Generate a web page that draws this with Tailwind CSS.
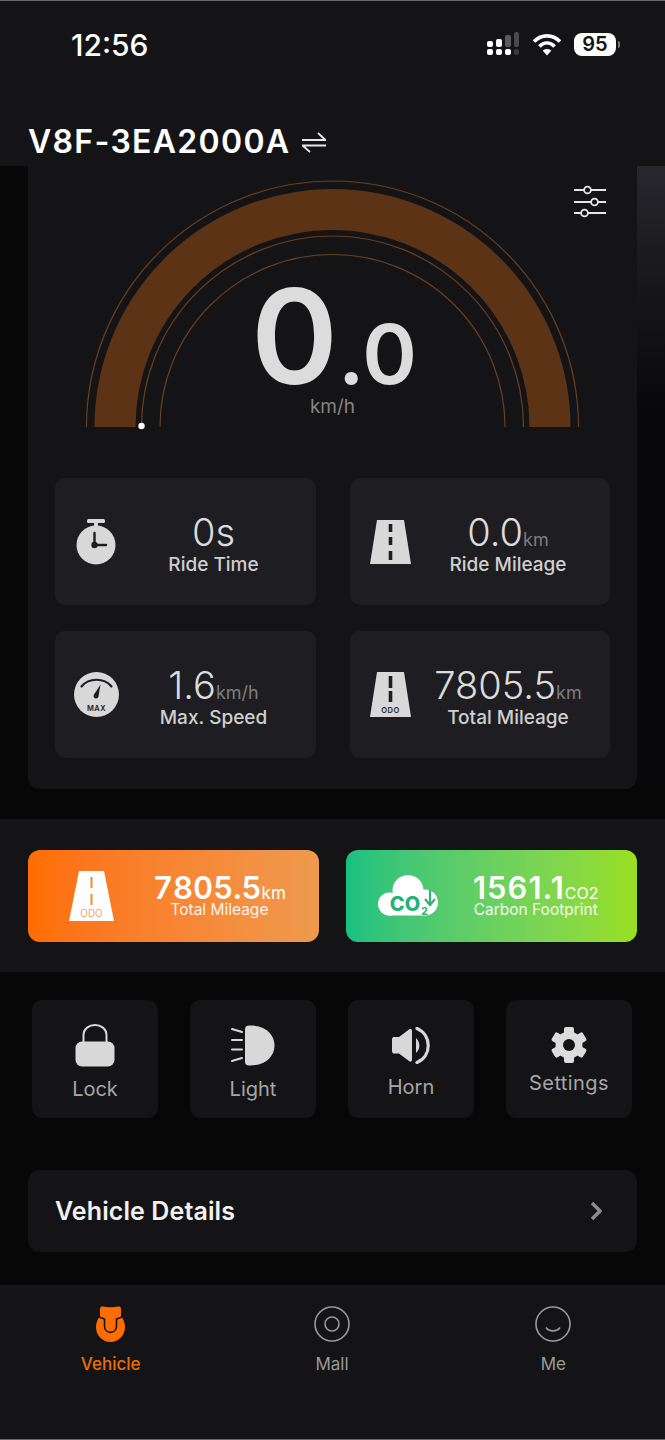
<!DOCTYPE html>
<html lang="en">
<head>
  <meta charset="UTF-8" />
  <title>Vehicle</title>
  <script src="https://cdn.jsdelivr.net/npm/@tailwindcss/browser@4"></script>
</head>

<body class="bg-[#070708]">
<div class="w-[665px] h-[1440px] flex flex-col overflow-hidden font-[Inter,sans-serif] bg-[#070708] text-white border-y border-y-[#6a6a6a]">

  <!-- Header -->
  <header class="h-[165px] shrink-0 bg-[#141416] flex flex-col">
    <div class="h-[121px] flex items-start justify-between pt-[26px] pl-[71px] pr-[45px]">
      <span class="text-[30px] leading-[36px] font-medium">12:56</span>
      <div class="flex items-center gap-[12px] pt-[5px]">
        <svg width="34" height="24" viewBox="0 0 34 24">
          <g fill="#fff">
            <rect x="1" y="9" width="6" height="6" rx="2"/><rect x="10" y="7" width="6" height="8" rx="2"/>
            <rect x="1" y="17" width="6" height="6" rx="2"/><rect x="10" y="17" width="6" height="6" rx="2"/><rect x="19" y="17" width="6" height="6" rx="2"/>
          </g>
          <rect x="19" y="3" width="6" height="12" rx="2" fill="#5a5a5a"/>
          <rect x="28" y="0" width="5" height="15" rx="2" fill="#4a4a4a"/>
          <rect x="28" y="17" width="5" height="6" rx="2" fill="#3a3a3a"/>
        </svg>
        <svg width="30" height="23" viewBox="0 0 30 23" fill="none" stroke="#fff" stroke-width="3.6">
          <path d="M2 8.6 C9.5 1 20.5 1 28 8.6"/>
          <path d="M7.4 13.4 C12 8.8 18 8.8 22.6 13.4"/>
          <path d="M15 22.5 L10.6 17.6 C13 15.4 17 15.4 19.4 17.6 Z" fill="#fff" stroke="none"/>
        </svg>
        <div class="flex items-center gap-[2px]">
          <div class="w-[42px] h-[23px] rounded-[8px] bg-white text-[#141416] text-[20px] leading-[23px] font-semibold text-center">95</div>
          <div class="w-[2px] h-[7px] rounded-r-full bg-[#777]"></div>
        </div>
      </div>
    </div>
    <div class="flex items-center pl-[28px] gap-[12px]">
      <span class="text-[32px] leading-[40px] font-semibold tracking-[1.3px]">V8F-3EA2000A</span>
      <svg width="24" height="21" viewBox="0 0 24 21" fill="none" stroke="#e8e8e8" stroke-width="1.8">
        <path d="M0 8 H23.5 L16 1"/>
        <path d="M24 13.5 H0.5 L8 20"/>
      </svg>
    </div>
  </header>

  <!-- Gauge and ride stats -->
  <div class="relative shrink-0 h-[623px]">
    <div class="absolute inset-y-0 right-0 w-[28px] bg-gradient-to-b from-[#27272d] to-[#08080a] to-[40%]"></div>
    <section class="relative mx-[28px] h-full bg-[#141416] rounded-b-[12px]">
      <svg class="block" width="609" height="270" viewBox="0 0 609 270" fill="none">
        <path d="M58.5 261 A246 246 0 0 1 550.5 261" stroke="#6a3f1e" stroke-width="1.2"/>
        <path d="M87 261 A217.5 217.5 0 0 1 522 261" stroke="#5c3415" stroke-width="41"/>
        <path d="M113.5 261 A191 191 0 0 1 495.5 261" stroke="#6a3f1e" stroke-width="1.2"/>
        <path d="M132 261 A172.5 172.5 0 0 1 477 261" stroke="#6a3f1e" stroke-width="1.2"/>
        <circle cx="113.5" cy="260" r="3.2" fill="#fff"/>
      </svg>
      <svg class="absolute top-[19px] left-[545px]" width="34" height="34" viewBox="0 0 34 34" fill="none" stroke="#e6e6e6" stroke-width="1.8">
        <path d="M1 5 H11 M18 5 H33 M1 17 H18 M25 17 H33 M1 28 H8 M15 28 H33"/>
        <circle cx="14.5" cy="5" r="3.4"/><circle cx="21.5" cy="17" r="3.4"/><circle cx="11.5" cy="28" r="3.4"/>
      </svg>
      <div class="absolute top-[120px] inset-x-0 flex flex-col items-center">
        <div class="flex items-baseline text-[#dcdcdc] font-semibold pl-[3px] h-[100px]">
          <span class="text-[132px] leading-[100px]">0</span><span class="text-[83px] leading-[100px]">.0</span>
        </div>
        <span class="text-[19px] leading-[24px] text-[#858585] mt-[9px]">km/h</span>
      </div>

      <div class="grid grid-cols-[261px_260px] grid-rows-[127px_127px] gap-x-[34px] gap-y-[26px] mt-[42px] ml-[27px]">
        <div class="bg-[#1e1e22] rounded-[10px] flex items-center">
          <div class="w-[82px] flex justify-center">
            <svg width="40" height="46" viewBox="0 0 40 46">
              <rect x="11" y="0" width="18" height="4" rx="1.5" fill="#d8d8d8"/>
              <rect x="18" y="3" width="4" height="5" fill="#d8d8d8"/>
              <circle cx="20" cy="26" r="19.5" fill="#d8d8d8"/>
              <path d="M18.5 14 V26 H30" fill="none" stroke="#1e1e22" stroke-width="2.4" stroke-linecap="round"/>
              <circle cx="18.5" cy="26" r="3.2" fill="#1e1e22"/>
            </svg>
          </div>
          <div class="flex-1 pr-[26px] pt-[3px] text-center">
            <div class="text-[38px] leading-[44px] font-light text-[#dcdcdc]">0s</div>
            <div class="text-[19px] leading-[22px] font-medium text-[#cfcfcf]">Ride Time</div>
          </div>
        </div>

        <div class="bg-[#1e1e22] rounded-[10px] flex items-center">
          <div class="w-[81px] flex justify-center">
            <svg width="41" height="44" viewBox="0 0 41 44">
              <path d="M7 0 H34 L41 44 H0 Z" fill="#d8d8d8"/>
              <path d="M20.5 4 V12 M20.5 17 V25 M20.5 31 V40" stroke="#1e1e22" stroke-width="3.6"/>
            </svg>
          </div>
          <div class="flex-1 pr-[25px] pt-[3px] text-center">
            <div class="text-[38px] leading-[44px] font-light text-[#dcdcdc]">0.0<span class="text-[18px] leading-none text-[#7d7d7d] font-normal">km</span></div>
            <div class="text-[19px] leading-[22px] font-medium text-[#cfcfcf]">Ride Mileage</div>
          </div>
        </div>

        <div class="bg-[#1e1e22] rounded-[10px] flex items-center">
          <div class="w-[82px] flex justify-center">
            <svg width="45" height="45" viewBox="0 0 45 45">
              <circle cx="22.5" cy="22.5" r="22.5" fill="#d8d8d8"/>
              <path d="M7.5 14.5 C15 5.5 30 5.5 37.5 14.5" fill="none" stroke="#1e1e22" stroke-width="2.2" stroke-linecap="round"/>
              <path d="M26.5 12.5 L24.5 24.5 C23.5 28 18.5 26.5 19.7 23 Z" fill="#1e1e22"/>
              <text x="22.5" y="38.5" text-anchor="middle" font-size="7.5" font-weight="600" letter-spacing="0.4" fill="#1e1e22">MAX</text>
            </svg>
          </div>
          <div class="flex-1 pr-[26px] pt-[3px] text-center">
            <div class="text-[38px] leading-[44px] font-light text-[#dcdcdc]">1.6<span class="text-[18px] leading-none text-[#7d7d7d] font-normal">km/h</span></div>
            <div class="text-[19px] leading-[22px] font-medium text-[#cfcfcf]">Max. Speed</div>
          </div>
        </div>

        <div class="bg-[#1e1e22] rounded-[10px] flex items-center">
          <div class="w-[81px] flex justify-center">
            <svg width="41" height="45" viewBox="0 0 41 45">
              <path d="M7 0 H34 L41 45 H0 Z" fill="#d8d8d8"/>
              <path d="M20.5 4 V16 M20.5 19 V30" stroke="#1e1e22" stroke-width="3.6"/>
              <text x="20.5" y="41" text-anchor="middle" font-size="7.5" font-weight="600" letter-spacing="0.6" fill="#1e1e22">ODO</text>
            </svg>
          </div>
          <div class="flex-1 pr-[25px] pt-[3px] text-center">
            <div class="text-[38px] leading-[44px] font-light text-[#dcdcdc]">7805.5<span class="text-[18px] leading-none text-[#7d7d7d] font-normal">km</span></div>
            <div class="text-[19px] leading-[22px] font-medium text-[#cfcfcf]">Total Mileage</div>
          </div>
        </div>
      </div>
    </section>
  </div>

  <!-- Totals -->
  <section class="shrink-0 mt-[30px] h-[153px] bg-[#141416] flex items-center gap-[27px] px-[28px]">
    <div class="w-[291px] h-[92px] rounded-[12px] bg-gradient-to-r from-[#ff6d00] to-[#ee9a4d] flex items-center">
      <div class="w-[125px] pl-[1px] flex justify-center">
        <svg width="45" height="50" viewBox="0 0 45 50">
          <path d="M10 0 H35 L45 50 H0 Z" fill="#fff"/>
          <path d="M22.5 6 V17 M22.5 23 V34" stroke="#f58a35" stroke-width="2"/>
          <text x="22.5" y="46" text-anchor="middle" font-size="10" fill="#f7a265">ODO</text>
        </svg>
      </div>
      <div class="text-center">
        <div class="text-[31px] leading-[30px] font-semibold tabular-nums">7805.5<span class="text-[17px] leading-none font-normal">km</span></div>
        <div class="text-[15.5px] leading-[18px] -mt-[2px] text-white/90">Total Mileage</div>
      </div>
    </div>
    <div class="w-[291px] h-[92px] rounded-[12px] bg-gradient-to-r from-[#15c080] to-[#9adf1e] flex items-center">
      <div class="w-[127px] pr-[3px] flex justify-center">
        <svg width="60" height="41" viewBox="0 0 60 41">
          <g fill="#fff">
            <circle cx="11.5" cy="29" r="11.5"/><circle cx="30" cy="15.5" r="15.5"/><circle cx="47" cy="27.5" r="13"/>
            <rect x="11" y="24" width="37" height="16.5"/>
          </g>
          <text x="27" y="36" text-anchor="middle" font-size="20" font-weight="800" fill="#22b27a">CO</text>
          <text x="46.5" y="40" text-anchor="middle" font-size="10" font-weight="800" fill="#2fb56f">2</text>
          <path d="M52 15 V30 M47 24 L52 30 L57 24" fill="none" stroke="#2fb56f" stroke-width="2.2"/>
        </svg>
      </div>
      <div class="text-center">
        <div class="text-[31px] leading-[30px] font-semibold tracking-[1px]">1561.1<span class="text-[16px] leading-none font-normal tracking-normal">CO2</span></div>
        <div class="text-[15.5px] leading-[18px] -mt-[2px] text-white/90">Carbon Footprint</div>
      </div>
    </div>
  </section>

  <!-- Controls -->
  <section class="shrink-0 mt-[28px] px-[32px] flex gap-[32px]">
    <div class="w-[126px] h-[118px] rounded-[10px] bg-[#141416] flex flex-col items-center pt-[23px]">
      <svg width="40" height="44" viewBox="0 0 40 44" fill="none">
        <path d="M8.5 20 V12.5 C8.5 -1.5 31.5 -1.5 31.5 12.5 V20" stroke="#d8d8d8" stroke-width="2"/>
        <rect x="0.5" y="18.5" width="39" height="25" rx="6.5" fill="#d8d8d8"/>
      </svg>
      <span class="text-[20px] leading-[24px] text-[#a6a6a6] mt-[10px]">Lock</span>
    </div>
    <div class="w-[126px] h-[118px] rounded-[10px] bg-[#141416] flex flex-col items-center pt-[25px]">
      <svg width="44" height="41" viewBox="0 0 44 41" fill="none">
        <path d="M14 5 C14 1 16 0.5 19 0.5 C35 0.5 43.5 10 43.5 20.5 C43.5 31 35 40.5 19 40.5 C16 40.5 14 40 14 36 Z" fill="#d8d8d8"/>
        <path d="M1 4 L11 7 M1 15 H11 M1 24.5 H11 M1 36 L11 33" stroke="#d8d8d8" stroke-width="2" stroke-linecap="round"/>
      </svg>
      <span class="text-[20px] leading-[24px] text-[#a6a6a6] mt-[11px]">Light</span>
    </div>
    <div class="w-[126px] h-[118px] rounded-[10px] bg-[#141416] flex flex-col items-center pt-[27px]">
      <svg width="40" height="37" viewBox="0 0 40 37" fill="none">
        <path d="M1 12.5 C1 10.5 2 10 3.5 10 H8 L18 2.5 C19.5 1.5 21 2 21 4 V32.5 C21 34.5 19.5 35.5 18 34 L8 26.5 H3.5 C2 26.5 1 26 1 24 Z" fill="#d8d8d8"/>
        <path d="M25 11 C29.5 15 29.5 22 25 26 Z" fill="#d8d8d8"/>
        <path d="M26 1.5 C41 8 41 29 26 35.5" stroke="#d8d8d8" stroke-width="3.2" stroke-linecap="round"/>
      </svg>
      <span class="text-[20px] leading-[24px] text-[#a6a6a6] mt-[11px]">Horn</span>
    </div>
    <div class="w-[126px] h-[118px] rounded-[10px] bg-[#141416] flex flex-col items-center pt-[27px]">
      <svg width="36" height="36" viewBox="-18 -18 36 36">
        <g fill="#dcdcdc">
          <circle r="13.5"/>
          <rect x="-5" y="-18" width="10" height="36" rx="2"/>
          <rect x="-5" y="-18" width="10" height="36" rx="2" transform="rotate(60)"/>
          <rect x="-5" y="-18" width="10" height="36" rx="2" transform="rotate(120)"/>
        </g>
        <circle r="6" fill="#141416"/>
      </svg>
      <span class="text-[20px] leading-[24px] text-[#a6a6a6] mt-[8px] tracking-[0.4px]">Settings</span>
    </div>
  </section>

  <!-- Vehicle details row -->
  <div class="shrink-0 mt-[52px] mx-[28px] h-[82px] rounded-[12px] bg-[#141416] flex items-center justify-between pl-[27px] pr-[35px]">
    <span class="text-[25px] leading-[30px] font-semibold text-[#f2f2f2] tracking-[0.1px]">Vehicle Details</span>
    <svg width="12" height="20" viewBox="0 0 12 20" fill="none"><path d="M2 2 L10 10 L2 18" stroke="#8c8c8c" stroke-width="3.4"/></svg>
  </div>

  <!-- Tab bar -->
  <nav class="mt-[33px] flex-1 bg-[#141416] grid grid-cols-3 pr-[1px]">
    <div class="flex flex-col items-center pt-[21px]">
      <svg width="29" height="36" viewBox="0 0 29 36">
        <path d="M4 3 C4 1 5 0.5 7 0.5 C11 1.5 18 1.5 22 0.5 C24 0.5 25 1 25 3 V10 C27.5 13 29 17 29 21 C29 29 23 36 14.5 36 C6 36 0 29 0 21 C0 17 1.5 13 4 10 Z" fill="#ff6d00"/>
        <path d="M2.5 10.5 C5 12 7 12.5 8.5 13 V20 C8.5 28.5 20.5 28.5 20.5 20 V13 C22 12.5 24 12 26.5 10.5" fill="none" stroke="#141416" stroke-width="1.6"/>
      </svg>
      <span class="text-[17px] leading-[22px] font-medium text-[#ef6c00] mt-[11px]">Vehicle</span>
    </div>
    <div class="flex flex-col items-center pt-[21px]">
      <svg width="36" height="36" viewBox="0 0 36 36" fill="none" stroke="#9a9a9a" stroke-width="1.6">
        <circle cx="18" cy="18" r="17"/><circle cx="18" cy="18" r="7"/>
      </svg>
      <span class="text-[17px] leading-[22px] text-[#9a9a9a] mt-[11px]">Mall</span>
    </div>
    <div class="flex flex-col items-center pt-[21px]">
      <svg width="36" height="36" viewBox="0 0 36 36" fill="none" stroke="#9a9a9a" stroke-width="1.6">
        <circle cx="18" cy="18" r="17"/><path d="M11 21.5 C14 26 22 26 25 21.5"/>
      </svg>
      <span class="text-[17px] leading-[22px] text-[#9a9a9a] mt-[11px]">Me</span>
    </div>
  </nav>
</div>
</body>
</html>
